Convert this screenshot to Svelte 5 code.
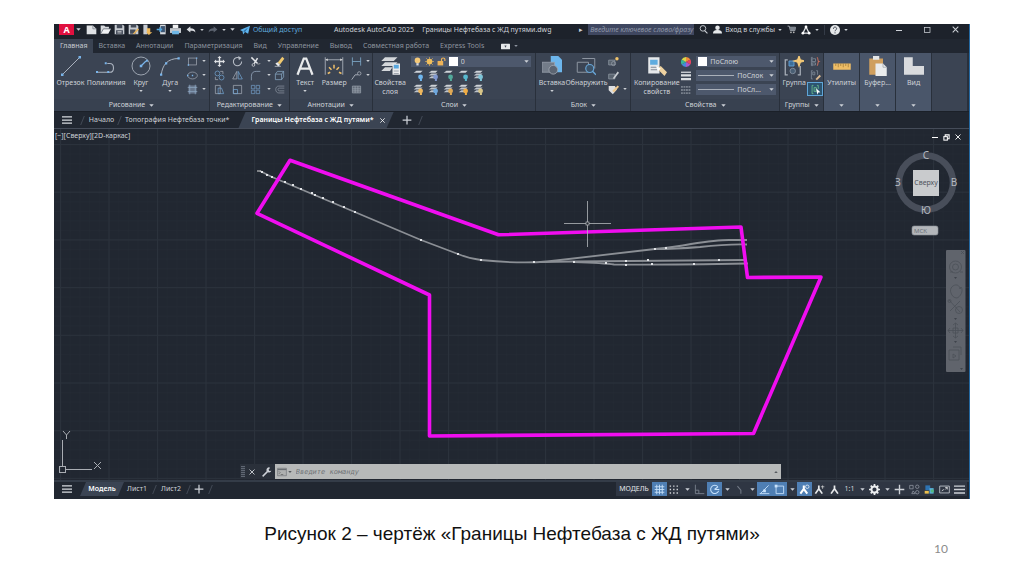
<script lang="ts">
	type Tool = { icon: string; label: string; menu?: boolean; cls?: string };

	const icons: Record<string, string> = {
		caret: '<path d="M1 4h14l-7 8z" fill="currentColor"/>',
		burger: '<path d="M0 3h16M0 8h16M0 13h16" stroke="currentColor" stroke-width="2"/>',
		plus: '<path d="M8 1v14M1 8h14" stroke="currentColor" stroke-width="2"/>',
		close: '<path d="M3 3l10 10M13 3L3 13" stroke="currentColor" stroke-width="1.8"/>',
		min: '<path d="M2 9h12" stroke="currentColor" stroke-width="2"/>',
		max: '<rect x="3" y="3" width="11" height="10" fill="none" stroke="currentColor" stroke-width="1.5"/>',
		restore: '<path d="M5 5V2h9v9h-3" fill="none" stroke="currentColor" stroke-width="2.4"/><rect x="2" y="6" width="8" height="8" fill="none" stroke="currentColor" stroke-width="2.4"/>',
		new: '<path d="M1 2h9l5 5v8H1z" fill="#dfe1e4"/><path d="M10 2v5h5" fill="none" stroke="#69707c"/>',
		open: '<path d="M1 14V2h5l2 2h5v3" fill="#d6d9dd"/><path d="M1 14l4-7h11l-4 7z" fill="#f0f1f2"/><path d="M1 14l4-7h11" fill="none" stroke="#555c68"/>',
		save: '<path d="M1 1h12l2 2v12H1z" fill="#c7cbd1"/><path d="M4 1h8v5H4zM3 9h10v6H3z" fill="#454c59"/><path d="M5 11h6M5 13h6" stroke="#e5e6e8"/>',
		saveas: '<path d="M1 1h12l2 2v12H1z" fill="#c7cbd1"/><path d="M4 1h8v4H4zM3 8h8v6H3z" fill="#454c59"/><path d="M7 14l7-8 2 2-7 7z" fill="#e9b45c"/>',
		export: '<path d="M2 1h6v14H2z" fill="#c7cbd1"/><path d="M7 6h5v6h3l-5 4-4-4h1z" fill="#efb95b"/>',
		mobile: '<path d="M6 1h8v14H6z" fill="#d7dade"/><path d="M7 3h6v9H7z" fill="#3d5673"/><path d="M1 8h6M5 5l3 3-3 3" fill="none" stroke="#55a6dd" stroke-width="2"/>',
		print: '<path d="M4 1h8v5H4z" fill="#f0f1f2"/><path d="M0 6h16v7H0z" fill="#c3c7cc"/><path d="M3 10h10v5H3z" fill="#6fb7e6"/>',
		undo: '<path d="M1 7l6-5v3c5 0 8 2 8 7-2-3-4-3-8-3v3z" fill="#d9dce0"/>',
		redo: '<path d="M15 7L9 2v3C4 5 1 7 1 12c2-3 4-3 8-3v3z" fill="#5c636f"/>',
		plane: '<path d="M0 8L16 1l-3 13-5-3-3 4-1-5z" fill="#5fb4ee"/><path d="M5 10l8-6-5 7" fill="#2c6da3"/>',
		search: '<circle cx="7" cy="6" r="5" fill="none" stroke="currentColor" stroke-width="1.6"/><path d="M10 10l5 5" stroke="currentColor" stroke-width="2"/>',
		user: '<circle cx="8" cy="5" r="4" fill="#e6e8ea"/><path d="M0 15c0-5 4-6 8-6s8 1 8 6z" fill="#e6e8ea"/>',
		cart: '<path d="M1 2h3l2 8h8l1-6H5" fill="none" stroke="#aab0b8" stroke-width="1.6"/><path d="M5 4h10l-1 5H6z" fill="#7d848f"/><circle cx="7" cy="13" r="1.5" fill="#bbb"/><circle cx="12" cy="13" r="1.5" fill="#bbb"/>',
		share: '<path d="M8 3L3 13h10z" fill="none" stroke="#e1e3e6" stroke-width="2"/><circle cx="8" cy="3" r="2.2" fill="#fff"/><circle cx="3" cy="13" r="2.2" fill="#fff"/><circle cx="13" cy="13" r="2.2" fill="#fff"/>',
		help: '<circle cx="8" cy="8" r="8" fill="#e4e6e8"/><path d="M5.5 6c0-4 5.500-3 5 0 0 2-2.500 2-2.500 4" fill="none" stroke="#3a414e" stroke-width="1.600"/><circle cx="8" cy="12.500" r="1" fill="#3a414e"/>',
		line: '<path d="M1 15L15 1" stroke="#a9b1bd" stroke-width=".8"/><path d="M0 14h2v2H0zM14 0h2v2h-2z" fill="#79b4ea"/>',
		pline: '<path d="M0 13h11c4 0 4-7 0-7H9" fill="none" stroke="#a9b1bd" stroke-width=".9"/><path d="M0 12h1.600v1.600H0zM9 12h1.600v1.600H9zM7 5h1.600v1.600H7z" fill="#79b4ea"/>',
		circle: '<circle cx="8" cy="8" r="7.200" fill="none" stroke="#a9b1bd" stroke-width=".7"/><path d="M8 8l4-4" stroke="#79b4ea"/><path d="M7 7h2v2H7zM12 3h1.500v1.500H12z" fill="#79b4ea"/>',
		arc: '<path d="M1 15C2 7 6 2 15 2" fill="none" stroke="#a9b1bd" stroke-width=".8"/><path d="M0 14h1.800v1.800H0zM4 5h1.800v1.800H4zM14 1h1.800v1.800H14z" fill="#79b4ea"/>',
		rect: '<rect x="2" y="3" width="12" height="10" fill="none" stroke="#a5acb7"/><path d="M1 12h2v2H1zM13 2h2v2h-2z" fill="#79b4ea"/>',
		ellipse: '<ellipse cx="8" cy="8" rx="7" ry="5" fill="none" stroke="#a5acb7"/><path d="M7 7h2v2H7zM0 7h2v2H0z" fill="#79b4ea"/>',
		hatch: '<rect x="2" y="2" width="12" height="12" fill="#66758a"/><path d="M1 5h14M1 11h14M4 1v14M12 1v14" stroke="#90aac6"/>',
		move: '<path d="M8 2v12M2 8h12" stroke="#e1e3e6" stroke-width="2"/><path d="M8 0l3 3H5zM8 16l3-3H5zM0 8l3-3v6zM16 8l-3-3v6z" fill="#e1e3e6"/>',
		rotate: '<path d="M11 3a6 6 0 1 0 3 5" fill="none" stroke="#b9bfc8" stroke-width="1.500"/><path d="M9 0l5 3-4 3z" fill="#b9bfc8"/>',
		trim: '<path d="M2 2l9 9M11 3l-5 8" stroke="#e3e5e8" stroke-width="2.200"/><circle cx="5" cy="13" r="2" fill="none" stroke="#e3e5e8"/><path d="M11 12l4-1" stroke="#bbb"/>',
		erase: '<path d="M5 10l7-9 3 3-6 8z" fill="#f0c96f"/><path d="M2 11l3-2 4 4-3 2z" fill="#ececec"/><path d="M1 15h9" stroke="#d9dce0"/>',
		copy: '<circle cx="5" cy="5" r="3.500" fill="none" stroke="#74a9d8"/><path d="M9 2h4v4M2 10v4h4" fill="none" stroke="#aab0ba"/><circle cx="11" cy="11" r="3.500" fill="none" stroke="#74a9d8"/>',
		mirror: '<path d="M7 2v11H1z" fill="none" stroke="#aab0ba"/><path d="M9 2v11h6z" fill="none" stroke="#74a9d8"/>',
		fillet: '<path d="M2 15V9c0-5 3-7 7-7h6" fill="none" stroke="#8fa0b6" stroke-width="1.200"/>',
		box: '<path d="M2 6h9v8H2zM2 6l3-4h9v8l-3 4M11 6l3-4" fill="none" stroke="#8fb0ce"/>',
		stretch: '<path d="M2 2h7v12H2z" fill="none" stroke="#aab0ba"/><path d="M6 6h5l3 8H6z" fill="none" stroke="#74a9d8"/>',
		scale: '<path d="M2 2h12v12H2z" fill="none" stroke="#aab0ba"/><path d="M2 8h6v6H2z" fill="none" stroke="#74a9d8"/>',
		array: '<path d="M2 2h5v5H2zM9 2h5v5H9zM2 9h5v5H2zM9 9h5v5H9z" fill="none" stroke="#74a0cb"/>',
		offset: '<path d="M15 3H7c-6 0-6 10 0 10h8M15 6H8c-3 0-3 4 0 4h7" fill="none" stroke="#8f98a5"/>',
		textA: '<path d="M2 15L7 2h2l5 13M4 10h8" fill="none" stroke="#e8eaec" stroke-width="1.800"/>',
		dim: '<path d="M1 1v14M15 1v14M2 3h12" fill="none" stroke="#aab1bc" stroke-width=".7"/><path d="M3 14l2-1M4 9l2 2M8 7v3M12 9l-2 2M14 14l-2-1" stroke="#efbf69" stroke-width="1.200"/><path d="M1 3l2-1v2zM15 3l-2-1v2z" fill="#ddd"/>',
		linear: '<path d="M2 2v12M14 2v12M2 8h12" stroke="#7eaacb" stroke-width="1.200"/>',
		leader: '<path d="M1 14l5-7h4" fill="none" stroke="#bac0c9" stroke-width="1.200"/><circle cx="12" cy="5" r="2.500" fill="none" stroke="#bac0c9"/>',
		table: '<path d="M2 3h12v10H2z" fill="#606976" stroke="#9ba3af"/><path d="M2 7h12M2 10h12M6 3v10M10 3v10" stroke="#9ba3af"/>',
		layers: '<path d="M4 1h10l-3 3H1zM4 5h10l-3 3H1zM4 9h6l-2 3H1z" fill="#d4d7db"/><path d="M10 6h6v9h-6z" fill="#e9eaec"/><path d="M11 7h4v3h-4z" fill="#58a7df"/><path d="M11 12h4M11 14h4" stroke="#8a929e" stroke-width=".6"/>',
		bulb: '<circle cx="8" cy="6" r="5" fill="#f5c978"/><path d="M6 11h4v4H6z" fill="#d9dce0"/>',
		sun: '<circle cx="8" cy="8" r="5" fill="#f1bf5c"/><path d="M8 0v16M0 8h16M2 2l12 12M14 2L2 14" stroke="#f1bf5c"/>',
		lock: '<path d="M1 7h10v8H1z" fill="#eeb358"/><path d="M8 7V4c0-3 6-3 6 0v3" fill="none" stroke="#eeb358" stroke-width="2"/>',
		insert: '<path d="M7 0h6l3 3v10H7z" fill="#6db6ec"/><path d="M0 5h10v8H0z" fill="#737c89" stroke="#9ba2ad" stroke-width=".6"/><circle cx="9" cy="11" r="3.500" fill="#5c6572" stroke="#9ba2ad" stroke-width=".7"/>',
		detect: '<path d="M1 5h9v8H1zM5 2h10v8" fill="none" stroke="#8d95a1" stroke-width=".8"/><circle cx="11" cy="10" r="3.200" fill="#3c5369" stroke="#68a6d8" stroke-width=".9"/><path d="M13 12l3 3" stroke="#68a6d8" stroke-width="1.200"/>',
		blockNew: '<path d="M1 6h9v7H1z" fill="#59636f" stroke="#98a0ab"/><circle cx="8" cy="11" r="3" fill="none" stroke="#98a0ab"/><circle cx="13" cy="4" r="2.500" fill="#f0c36c"/>',
		blockEdit: '<path d="M1 6h9v7H1z" fill="#59636f" stroke="#98a0ab"/><path d="M7 12l7-10 2 2-7 9z" fill="#c8ccd2"/>',
		tag: '<path d="M1 3h9l3 5-6 7-6-6z" fill="#dddfe2"/><path d="M6 10l8-8 2 2-7 8z" fill="#f0c88c"/>',
		props: '<path d="M1 1h9v13H1z" fill="#e6e8ea"/><path d="M2.500 3h6v4h-6z" fill="#60acdf"/><path d="M3 9h5M3 11h5" stroke="#848b96" stroke-width=".8"/><path d="M8 10l3-2 5 5-2 3z" fill="#eed2a0"/><path d="M7 8l4 2-2 2z" fill="#fff"/>',
		wheel: '<path d="M8 8V0a8 8 0 0 1 7 4z" fill="#f08b3b"/><path d="M8 8l7-4a8 8 0 0 1 0 8z" fill="#e8435f"/><path d="M8 8l7 4a8 8 0 0 1-7 4z" fill="#a95ac8"/><path d="M8 8v8a8 8 0 0 1-7-4z" fill="#4689dc"/><path d="M8 8l-7 4a8 8 0 0 1 0-8z" fill="#38b597"/><path d="M8 8L1 4a8 8 0 0 1 7-4z" fill="#d8d64b"/>',
		weight: '<path d="M0 2h16" stroke="#d9dce0" stroke-width="2"/><path d="M0 7h16M0 13h16" stroke="#d9dce0" stroke-width="3.500"/>',
		ltype: '<path d="M0 3h16M0 8h16M0 13h16" stroke="#78808c" stroke-width="3" stroke-dasharray="3 1"/>',
		group: '<path d="M3 3H1v12h2M11 15h2V8" fill="none" stroke="#a9b0ba"/><path d="M4 4h4v4H4z" fill="#3d6e99" stroke="#62a2d8" stroke-width=".7"/><circle cx="7" cy="12" r="2.200" fill="#4a5f74" stroke="#8d99a8" stroke-width=".6"/><path d="M12 0l1 3 3 1-3 1-1 3-1-3-3-1 3-1z" fill="#f4c977" stroke="#f4c977"/>',
		ungroup: '<path d="M4 2H2v12h2M3 4h5v4H3zM3 10h5v3H3z" fill="none" stroke="#8b96a5"/><path d="M10 2c3 1 0 5 3 6-3 1 0 5-3 6" fill="none" stroke="#c56e5e" stroke-width="1.500"/>',
		groupEdit: '<path d="M4 1H2v12h2M4 3h3v4H4zM9 1h2v6" fill="none" stroke="#8b96a5"/><path d="M8 13l6-6 2 2-6 6z" fill="#d9b891"/>',
		groupSel: '<path d="M5 2H3v12h2M6 5h3v6H6zM10 2h2v5" fill="none" stroke="#69b88a" stroke-width="1.300"/><path d="M9 6l6 6-3 .5-1.500 3z" fill="#fff"/>',
		ruler: '<path d="M1 6h14v5H1z" fill="#eebd66"/><path d="M3 6v2M5 6v3M7 6v2M9 6v3M11 6v2M13 6v3" stroke="#8f6c2d" stroke-width=".5"/>',
		clip: '<path d="M1 2h11v13H1z" fill="#cf9f5e"/><path d="M4 0h5v3H4z" fill="#e5e6e8"/><path d="M6 6h6l3 3v7H6z" fill="#e9ebec"/><path d="M12 6v3h3" fill="none" stroke="#8d959f" stroke-width=".5"/>',
		view: '<path d="M0 1h7v7h9v7H0z" fill="#d9dbde"/>',
		wrench: '<path d="M1 15l8-8" stroke="currentColor" stroke-width="2.400"/><path d="M13 1a4 4 0 1 0 2 5l-3 .5-1.500-2z" fill="currentColor"/>',
		console: '<path d="M1 2h14v12H1z" fill="#aeb0b0" stroke="#6b6f73"/><path d="M1 4h14" stroke="#6b6f73" stroke-width="2"/><path d="M3 7l2 2-2 2M6 12h4" fill="none" stroke="#555"/>',
		grid: '<path d="M1 4h14M1 8h14M1 12h14M4 1v14M8 1v14M12 1v14" stroke="currentColor" stroke-width="1.300"/>',
		snap: '<path d="M1 3h14M1 8h14M1 13h14" stroke="#d5d8dc" stroke-width="2" stroke-dasharray="2 3"/>',
		ortho: '<path d="M2 1v13h13M2 9h5v5" fill="none" stroke="#7a828f" stroke-width="1.300"/>',
		polar: '<path d="M13 4a6 6 0 1 0 1 6M8 8h7M8 8l5-4" fill="none" stroke="currentColor" stroke-width="1.500"/>',
		iso: '<path d="M5 3l5 6v5" fill="none" stroke="#747c88" stroke-width="1.500"/>',
		track: '<path d="M1 14h14M2 14L14 2" fill="none" stroke="currentColor" stroke-width="1.300"/><path d="M6 8h4v4H6z" fill="currentColor"/>',
		osnap: '<path d="M3 3h11v11H3z" fill="none" stroke="currentColor" stroke-width="1.300"/><path d="M1 1h4v4H1z" fill="currentColor"/>',
		person: '<path d="M8 2v6M8 7l-5 7M8 7l5 7" stroke="#e8eaec" stroke-width="2.500" fill="none"/>',
		personA: '<path d="M7 2v6M7 7l-5 7M7 7l5 7" stroke="#fff" stroke-width="3" fill="none"/><circle cx="12" cy="4" r="2.500" fill="none" stroke="#fff"/>',
		personB: '<path d="M7 2v6M7 7l-5 7M7 7l5 7" stroke="#e8eaec" stroke-width="2.500" fill="none"/><path d="M10 4h5M12.500 2v5" stroke="#ddd"/>',
		gear: '<circle cx="8" cy="8" r="4.500" fill="none" stroke="#eceef0" stroke-width="3"/><path d="M8 0v3M8 13v3M0 8h3M13 8h3M2.500 2.500l2 2M11.500 11.500l2 2M13.500 2.500l-2 2M2.500 13.500l2-2" stroke="#eceef0" stroke-width="2.500"/>',
		isolate: '<path d="M1 2h5v5H1zM6 10l3 4H4z" fill="none" stroke="#9aa1ac"/><circle cx="12" cy="4" r="2.500" fill="none" stroke="#9aa1ac"/><circle cx="12" cy="12" r="2.500" fill="none" stroke="#9aa1ac"/>',
		perf: '<path d="M2 2h7v7H2z" fill="#2e73b2"/><path d="M8 6h6v8H8z" fill="#5ab2df"/><path d="M1 10h6v4H1z" fill="#ecc04e"/><circle cx="12" cy="10" r="2.500" fill="#55b981"/>',
		full: '<path d="M1 3h14v10H1z" fill="none" stroke="#bcc1c9" stroke-width="1.300"/><path d="M4 10l3-2M12 5L9 8M12 5v3M12 5H9" fill="none" stroke="#e3e5e8" stroke-width="1.200"/>',
		media: '<rect x="0" y="3" width="16" height="10" rx="1" fill="#e6e8ea"/><path d="M6 6h4l-2 4z" fill="#444b58"/>'
	};

	// small layer commands: a sheet stack with a coloured mark
	const layerMarks = ['#6fb6ee', '#7f97cf', '#52a99b', '#58b9cf', '#7ec5d8', '#efb85e', '#6fa7dd', '#e0aa56', '#f0ad45', '#d8c689'];

	const drawTools: Tool[] = [
		{ icon: 'line', label: 'Отрезок', cls: 'w31' },
		{ icon: 'pline', label: 'Полилиния', cls: 'w40' },
		{ icon: 'circle', label: 'Круг', menu: true, cls: 'w29' },
		{ icon: 'arc', label: 'Дуга', menu: true, cls: 'w29' }
	];
	const ribbonTabs = ['Главная', 'Вставка', 'Аннотации', 'Параметризация', 'Вид', 'Управление', 'Вывод', 'Совместная работа', 'Express Tools'];
	const quick = ['new', 'open', 'save', 'saveas', 'export', 'mobile', 'print'];
	const editTools = ['move', 'rotate', 'trim', 'caret', 'erase', 'copy', 'mirror', 'fillet', 'caret', 'box', 'stretch', 'scale', 'array', 'caret', 'offset'];
	const folded: Tool[] = [
		{ icon: 'ruler', label: 'Утилиты' },
		{ icon: 'clip', label: 'Буфер...' },
		{ icon: 'view', label: 'Вид' }
	];
	const status = [
		{ icon: 'grid', on: true }, { icon: 'snap' }, { icon: 'caret' }, { icon: 'ortho' },
		{ icon: 'polar', on: true }, { icon: 'caret' }, { icon: 'iso' }, { icon: 'caret' },
		{ icon: 'track', on: true }, { icon: 'osnap', on: true }, { icon: 'caret' },
		{ icon: 'personA', on: true }, { icon: 'personB' }, { icon: 'person' }, { icon: '1:1' }, { icon: 'caret' },
		{ icon: 'gear' }, { icon: 'caret' }, { icon: 'plus' }, { icon: 'isolate' },
		{ icon: 'perf' }, { icon: 'full' }, { icon: 'burger' }
	];
	const nodes = [
		[262, 172], [267, 175], [272, 177], [285, 182], [293, 185], [301, 189], [312, 193], [315, 195], [323, 198],
		[333, 202], [344, 207], [355, 212], [421, 240], [458, 254], [481, 260], [534, 262], [574, 262],
		[606, 263], [626, 261], [626, 265], [648, 260], [655, 249], [666, 248], [652, 264], [694, 264], [719, 260]
	];
</script>

{#snippet icon(name: string, size: number)}
	<svg class="icon" width={size} height={size} viewBox="0 0 16 16" aria-hidden="true">{@html icons[name]}</svg>
{/snippet}

{#snippet tool(t: Tool)}
	<button class={`tool ${t.cls ?? ''}`} type="button">
		{@render icon(t.icon, 20)}
		<span>{t.label}</span>
		{#if t.menu}{@render icon('caret', 4)}{/if}
	</button>
{/snippet}

{#snippet mini(name: string)}
	<button class="mini" class:arrow={name === 'caret'} type="button" aria-label={name}>{@render icon(name, name === 'caret' ? 4 : 11)}</button>
{/snippet}

{#snippet title(label: string)}
	<button class="panel-title" type="button">{label} {@render icon('caret', 5)}</button>
{/snippet}

<main class="slide">
	<div class="window">
		<header class="titlebar">
			<button class="logo" type="button">A</button>
			<button class="mini arrow" type="button" aria-label="Меню">{@render icon('caret', 5)}</button>
			<div class="quick">
				{#each quick as name}
					<button type="button" aria-label={name}>{@render icon(name, 11)}</button>
				{/each}
			</div>
			<div class="history">
				<button type="button" aria-label="Отменить">{@render icon('undo', 10)}</button>
				{@render icon('caret', 4)}
				<button type="button" aria-label="Повторить">{@render icon('redo', 10)}</button>
				{@render icon('caret', 4)}
				{@render icon('caret', 5)}
			</div>
			<button class="share" type="button">{@render icon('plane', 10)} Общий доступ</button>
			<div class="doc-title"><span>Autodesk AutoCAD 2025</span><span>Границы Нефтебаза с ЖД путями.dwg</span></div>
			<div class="account">
				<span class="play">▸</span>
				<input type="text" placeholder="Введите ключевое слово/фразу" aria-label="Поиск" />
				<button type="button" aria-label="Найти">{@render icon('search', 9)}</button>
				<button class="login" type="button">{@render icon('user', 9)} Вход в службы {@render icon('caret', 4)}</button>
				<button type="button" aria-label="Магазин">{@render icon('cart', 9)}</button>
				<button class="pair" type="button" aria-label="Приложения">{@render icon('share', 10)}{@render icon('caret', 4)}</button>
				<button class="pair help" type="button" aria-label="Справка">{@render icon('help', 10)}{@render icon('caret', 4)}</button>
			</div>
			<div class="win-buttons">
				<button type="button" aria-label="Свернуть">{@render icon('min', 8)}</button>
				<button type="button" aria-label="Развернуть">{@render icon('max', 8)}</button>
				<button type="button" aria-label="Закрыть">{@render icon('close', 9)}</button>
			</div>
		</header>

		<nav class="ribbon-tabs">
			{#each ribbonTabs as tab, i}
				<button class:active={i === 0} type="button">{tab}</button>
			{/each}
			<button class="pair media" type="button" aria-label="Вид ленты">{@render icon('media', 9)}{@render icon('caret', 4)}</button>
		</nav>

		<section class="ribbon">
			<div class="panel draw">
				<div class="panel-body">
					{#each drawTools as t}{@render tool(t)}{/each}
					<div class="grid two">
						{#each ['rect', 'caret', 'ellipse', 'caret', 'hatch', 'caret'] as name}{@render mini(name)}{/each}
					</div>
				</div>
				{@render title('Рисование')}
			</div>
			<div class="panel edit">
				<div class="panel-body">
					<div class="grid five">
						{#each editTools as name}{@render mini(name)}{/each}
					</div>
				</div>
				{@render title('Редактирование')}
			</div>
			<div class="panel notes">
				<div class="panel-body">
					{@render tool({ icon: 'textA', label: 'Текст', menu: true, cls: 'w29' })}
					{@render tool({ icon: 'dim', label: 'Размер', cls: 'w29' })}
					<div class="grid two">
						{#each ['linear', 'caret', 'leader', 'caret', 'table'] as name}{@render mini(name)}{/each}
					</div>
				</div>
				{@render title('Аннотации')}
			</div>
			<div class="panel layers">
				<div class="panel-body">
					{@render tool({ icon: 'layers', label: 'Свойства слоя', cls: 'w33' })}
					<div class="layer-side">
						<div class="combo">
							{@render icon('bulb', 9)}{@render icon('sun', 9)}{@render icon('lock', 9)}<i class="swatch"></i>
							<select aria-label="Слой"><option>0</option></select>
							{@render icon('caret', 5)}
						</div>
						<div class="layer-grid">
							{#each layerMarks as color, i}
								<button class="mini" type="button" aria-label={`Команда слоя ${i + 1}`}>
									<svg class="icon" width="11" height="11" viewBox="0 0 16 16">
										<path d="M5 1h9l-3 3H1z" fill="#cfd3d8" />
										{#if i > 4 || i === 1 || i === 4}
											<path d="M5 5h9l-3 3H1zM5 9h9l-3 3H1z" fill="#bfc4cb" />
										{/if}
										<circle cx="11" cy="10" r="3.500" fill={color} />
										<path d="M10 13h3v3h-3z" fill={color} />
									</svg>
								</button>
							{/each}
						</div>
					</div>
				</div>
				{@render title('Слои')}
			</div>
			<div class="panel block">
				<div class="panel-body">
					{@render tool({ icon: 'insert', label: 'Вставка', menu: true, cls: 'w29' })}
					{@render tool({ icon: 'detect', label: 'Обнаружить', cls: 'w40' })}
					<div class="grid two">
						{#each ['blockNew', '', 'blockEdit', '', 'tag', 'caret'] as name}
							{#if name}{@render mini(name)}{:else}<span></span>{/if}
						{/each}
					</div>
				</div>
				{@render title('Блок')}
			</div>
			<div class="panel props">
				<div class="panel-body">
					{@render tool({ icon: 'props', label: 'Копирование свойств', cls: 'w49' })}
					<div class="prop-rows">
						<div class="prop-row">
							{@render icon('wheel', 10)}
							<div class="combo"><i class="swatch"></i><select aria-label="Цвет"><option>ПоСлою</option></select>{@render icon('caret', 5)}</div>
						</div>
						<div class="prop-row">
							{@render icon('weight', 10)}
							<div class="combo"><i class="rule"></i><select aria-label="Вес линий"><option>ПоСлок</option></select>{@render icon('caret', 5)}</div>
						</div>
						<div class="prop-row">
							{@render icon('ltype', 10)}
							<div class="combo"><i class="rule"></i><select aria-label="Тип линий"><option>ПоСл...</option></select>{@render icon('caret', 5)}</div>
						</div>
					</div>
				</div>
				{@render title('Свойства')}
			</div>
			<div class="panel groups">
				<div class="panel-body">
					{@render tool({ icon: 'group', label: 'Группа', cls: 'w26' })}
					<div class="grid one">
						{@render mini('ungroup')}
						{@render mini('groupEdit')}
						<button class="mini picked" type="button" aria-label="Выбор групп">{@render icon('groupSel', 11)}</button>
					</div>
				</div>
				{@render title('Группы')}
			</div>
			{#each folded as t}
				<div class="panel folded">
					<div class="panel-body">{@render tool(t)}</div>
					{@render title('')}
				</div>
			{/each}
			<div class="panel rest"></div>
		</section>

		<nav class="file-tabs">
			<button class="burger" type="button" aria-label="Меню вкладок">{@render icon('burger', 10)}</button>
			<i class="slash"></i>
			<button class="start" type="button">Начало</button>
			<i class="slash"></i>
			<button class="topo" type="button">Топография Нефтебаза точки*</button>
			<button class="current" type="button">Границы Нефтебаза с ЖД путями* {@render icon('close', 7)}</button>
			<button type="button" aria-label="Новая вкладка">{@render icon('plus', 10)}</button>
			<i class="slash"></i>
		</nav>

		<section class="viewport">
			<svg class="drawing" viewBox="54 129 915 351" role="img" aria-label="Чертёж">
				<defs>
					<pattern id="minor" x="60" y="144" width="9.700" height="9.540" patternUnits="userSpaceOnUse">
						<path d="M.5 0v10M0 .5h10" stroke="#242a33" stroke-width=".6" fill="none" />
					</pattern>
					<pattern id="major" x="60" y="144" width="48.500" height="47.700" patternUnits="userSpaceOnUse">
						<path d="M.5 0v48M0 .5h49" stroke="#2b323c" fill="none" />
					</pattern>
				</defs>
				<rect x="54" y="129" width="915" height="351" fill="#212731" />
				<rect x="54" y="129" width="915" height="351" fill="url(#minor)" />
				<rect x="54" y="129" width="915" height="351" fill="url(#major)" />

				<g fill="none" stroke="#8b8f95" stroke-width="1.800">
					<path d="M260 171l12 6 149 63 37 14q12 5 23 6 40 4 66 1.500l108-12.500q20-2 36-5 26-4 38-4h18" />
					<path d="M655 249q20 0 45-2 26-3 47-2.500" />
					<path d="M540 262l34-.5 171-1.500" />
					<path d="M574 262q30 1 40 2.500 50 .5 134-1" />
				</g>
				{#each nodes as [x, y]}
					<rect x={x - 1} y={y - 1} width="2" height="2" fill="#e2e4e7" />
				{/each}
				<path d="M257 171h4" stroke="#ddd" />

				<path
					d="M290 160.300L498.500 234.800 741 227l6.500 50.500 73.500-.5-67.500 156.500-324 2.500V295L257 213.300z"
					fill="none"
					stroke="#f00df0"
					stroke-width="3.600"
					stroke-linejoin="round"
				/>

				<path d="M587.500 201v46M564 223.500h47" stroke="#b4b7bb" stroke-width=".8" />
				<rect x="586" y="222" width="3" height="3" fill="#222831" stroke="#b4b7bb" stroke-width=".7" />

				<g fill="none" stroke="#a9adb3">
					<path d="M62.500 440v26M65 469.500h27" />
					<rect x="59.500" y="466.500" width="6" height="6" />
					<path d="M63 431l3.500 4 3.500-4M66.500 435v4M94 462l7 7M101 462l-7 7" />
				</g>

				<circle cx="926" cy="182.500" r="27" fill="none" stroke="#484e5a" stroke-width="6.500" />
				<rect x="913" y="170" width="26" height="26" fill="#c9cbcd" />
				<g text-anchor="middle" font-size="10" fill="#b4b8bf">
					<text x="926" y="159">С</text>
					<text x="926" y="214">Ю</text>
					<text x="898" y="186">З</text>
					<text x="954" y="186">В</text>
					<text x="926" y="185" font-size="7" fill="#50555d">Сверху</text>
				</g>
				<rect x="912" y="226" width="26" height="9" rx="2" fill="#b3b6ba" stroke="#8b9097" stroke-width=".6" />
				<text x="914" y="233" font-size="6" fill="#6c7178">МСК</text>

				<rect x="946" y="250" width="19.500" height="122" rx="1" fill="#60646c" />
				<g fill="none" stroke="#4b5058" stroke-width=".8">
					<circle cx="955.500" cy="267" r="6" />
					<circle cx="955.500" cy="267" r="3" />
					<path d="M950 272h3M960 272h3M961 251l3 3M964 251l-3 3" />
					<path d="M951 293c-3-7 8-12 9-4l1-2c3 4-1 10-4 11-3 0-5-2-6-5z" />
					<path d="M949 300l11 12M960 301l-10 10" />
					<circle cx="949.500" cy="301" r="1.500" />
					<circle cx="959" cy="310" r="3.500" />
					<path d="M955.500 323v15M948 330.500h15M953 325l2.500-2 2.500 2M953 336l2.500 2 2.500-2M950 328l-2 2.500 2 2.500M961 328l2 2.500-2 2.500M953 328h5v5h-5z" />
					<path d="M949 350h10v10h-10zM953 347h8v8M953 354l3 2-3 2z" />
				</g>
				<path d="M954 277h3l-1.500 2zM954 318h3l-1.500 2zM954 341h3l-1.500 2zM960 368h3l-1.500 2z" fill="#3f444c" />
			</svg>

			<span class="view-label">[−][Сверху][2D-каркас]</span>
			<div class="view-buttons">
				<button type="button" aria-label="Свернуть вид">{@render icon('min', 8)}</button>
				<button type="button" aria-label="Восстановить вид">{@render icon('restore', 7)}</button>
				<button type="button" aria-label="Закрыть вид">{@render icon('close', 8)}</button>
			</div>

			<div class="command">
				<i class="grip"></i>
				<button type="button" aria-label="Закрыть строку">{@render icon('close', 8)}</button>
				<button type="button" aria-label="Настройка">{@render icon('wrench', 10)}</button>
				<div class="prompt">
					{@render icon('console', 10)}{@render icon('caret', 4)}
					<input type="text" placeholder="Введите команду" aria-label="Команда" />
					<span class="up">{@render icon('caret', 4)}</span>
				</div>
			</div>
		</section>

		<footer class="statusbar">
			<button class="burger" type="button" aria-label="Меню листов">{@render icon('burger', 10)}</button>
			<button class="model" type="button">Модель</button>
			<button class="sheet" type="button">Лист1</button>
			<i class="slash"></i>
			<button class="sheet" type="button">Лист2</button>
			<i class="slash"></i>
			<button class="add" type="button" aria-label="Новый лист">{@render icon('plus', 10)}</button>
			<i class="slash"></i>
			<div class="toggles">
				<button class="space" type="button">МОДЕЛЬ</button>
				{#each status as s}
					<button class:on={s.on} class:arrow={s.icon === 'caret'} type="button" aria-label={s.icon}>
						{#if s.icon === '1:1'}1:1{:else}{@render icon(s.icon, s.icon === 'caret' ? 5 : 11)}{/if}
					</button>
				{/each}
			</div>
		</footer>
	</div>

	<p class="caption">Рисунок 2 – чертёж «Границы Нефтебаза с ЖД путями»</p>
	<span class="page">10</span>
</main>

<style>
	:global(body) {
		margin: 0;
		background: #fff;
	}

	.slide {
		display: flex;
		flex-direction: column;
		padding: 24px 54px 0;
	}

	.window {
		border-right: 1px solid #2468a0;
		background: #212731;
		color: #cdd1d7;
		font-family: 'Noto Sans', 'Open Sans', sans-serif;
		font-size: 7px;
		line-height: 8px;
	}

	button,
	input,
	select {
		margin: 0;
		padding: 0;
		border: 0;
		outline: 0;
		background: none;
		color: inherit;
		font: inherit;
	}

	button {
		display: inline-flex;
		align-items: center;
		justify-content: center;
		flex: none;
		white-space: nowrap;
	}

	.icon {
		display: block;
		flex: none;
	}

	.titlebar {
		display: flex;
		align-items: center;
		height: 15px;
		padding: 0 9px 4px 5px;
		box-sizing: border-box;
		background: #1d222b;
	}

	.logo {
		width: 15px;
		height: 11px;
		background: #e0103f;
		color: #fff;
		font-size: 9px;
		font-weight: 700;
	}

	.quick {
		display: flex;
		gap: 3px;
		margin-left: 4px;
	}

	.history {
		display: flex;
		align-items: center;
		gap: 4px;
		margin-left: 5px;
	}

	.share {
		gap: 3px;
		margin-left: 5px;
		color: #5fa9dc;
	}

	.doc-title {
		display: flex;
		flex: 1;
		justify-content: center;
		gap: 8px;
		padding-left: 4px;
		white-space: nowrap;
	}

	.account {
		display: flex;
		align-items: center;
		gap: 5px;
	}

	.account input {
		width: 106px;
		height: 11px;
		padding-left: 2px;
		box-sizing: border-box;
		background: #3f4760;
		font-style: italic;
	}

	.account input::placeholder {
		color: #8f97a9;
		opacity: 1;
	}

	.play {
		width: 4px;
	}

	.login {
		gap: 3px;
	}

	.pair {
		gap: 4px;
	}

	.help {
		padding-left: 5px;
		border-left: 1px solid #343b47;
	}

	.win-buttons {
		display: flex;
		gap: 20px;
		margin-left: 47px;
	}

	.ribbon-tabs {
		display: flex;
		height: 14px;
		color: #8d949f;
	}

	.ribbon-tabs button {
		padding: 0 5px 0 6px;
	}

	.ribbon-tabs .active {
		background: #3b4453;
		color: #c8ccd3;
	}

	.ribbon-tabs .media {
		margin-left: 6px;
	}

	.ribbon {
		display: flex;
		height: 58px;
		padding-right: 2px;
		background: #29303b;
		gap: 1px;
	}

	.panel {
		display: flex;
		flex-direction: column;
		min-width: 0;
		background: #3b4453;
	}

	.draw { flex: 155; }
	.edit { flex: 79; }
	.notes { flex: 82; }
	.layers { flex: 163; }
	.block { flex: 94; }
	.props { flex: 148; }
	.groups { flex: 43; }
	.folded { flex: 35; background: #4a566a; }
	.rest { flex: 35; }

	.panel-body {
		display: flex;
		flex: 1;
		justify-content: space-between;
		min-height: 0;
		padding: 1px 1px 0;
	}

	.panel-title {
		gap: 4px;
		height: 12px;
		background: #384150;
	}

	.folded .panel-title {
		background: none;
	}

	.folded .panel-body {
		justify-content: center;
	}

	.tool {
		flex-direction: column;
		justify-content: flex-start;
		gap: 2px;
		padding-top: 2px;
		line-height: 9px;
		white-space: normal;
	}

	.tool span {
		height: 9px;
	}

	.w26 { width: 26px; }
	.w29 { width: 29px; }
	.w31 { width: 31px; }
	.w33 { width: 33px; }
	.w40 { width: 40px; }
	.w49 { width: 49px; }

	.grid {
		display: grid;
		grid-auto-rows: 14px;
		align-items: center;
	}

	.one { grid-template-columns: 16px; }
	.two { grid-template-columns: 15px 8px; }
	.five {
		flex: 1;
		grid-template-columns: 18px 18px 18px 6px 18px;
	}

	.mini {
		height: 14px;
	}

	.arrow {
		width: 8px;
	}

	.picked {
		background: #2c5470;
		box-shadow: inset 0 0 0 1px #5fa5d8;
	}

	.layer-side {
		display: flex;
		flex: 1;
		flex-direction: column;
		margin: 2px 3px 0 4px;
	}

	.layer-grid {
		display: grid;
		grid-template-columns: repeat(5, 15px);
		margin-top: 1px;
	}

	.combo {
		display: flex;
		flex: 1;
		align-items: center;
		gap: 3px;
		height: 11px;
		min-width: 0;
		padding: 0 2px;
		background: #4d586c;
	}

	.layer-side .combo {
		flex: none;
	}

	.combo select {
		flex: 1;
		min-width: 0;
		height: 11px;
		appearance: none;
	}

	.swatch {
		width: 9px;
		height: 9px;
		background: #fff;
	}

	.rule {
		width: 36px;
		height: 1px;
		background: #aab0ba;
	}

	.prop-rows {
		display: flex;
		flex: 1;
		flex-direction: column;
		gap: 3px;
		margin: 2px 2px 0 0;
	}

	.prop-row {
		display: flex;
		align-items: center;
		gap: 5px;
	}

	.file-tabs {
		display: flex;
		align-items: stretch;
		height: 16px;
		border-top: 1px solid #1b2028;
		border-bottom: 1px solid #454c59;
	}

	.burger {
		width: 26px;
		color: #d8dbe0;
	}

	.slash {
		width: 1px;
		height: 9px;
		margin: auto 5px auto 2px;
		background: #434a56;
		transform: skewX(-22deg);
	}

	.start {
		width: 27px;
		margin-right: 2px;
	}

	.topo {
		margin-right: 9px;
	}

	.current {
		gap: 5px;
		margin-right: 8px;
		padding: 0 8px 0 13px;
		background: #3b4453;
		clip-path: polygon(7px 0, 100% 0, calc(100% - 7px) 100%, 0 100%);
		color: #fff;
		font-weight: 600;
	}

	.file-tabs .slash:last-child {
		margin-left: 8px;
	}

	.viewport {
		position: relative;
	}

	.drawing {
		display: block;
		width: 100%;
		height: auto;
	}

	.view-label {
		position: absolute;
		top: 3px;
		left: 1px;
	}

	.view-buttons {
		position: absolute;
		top: 4px;
		right: 7px;
		display: flex;
		gap: 4px;
		color: #fff;
	}

	.command {
		position: absolute;
		right: 20.5%;
		bottom: 1px;
		left: 20.3%;
		display: flex;
		height: 15px;
		background: #2a303a;
	}

	.command button {
		width: 15px;
	}

	.grip {
		width: 4px;
		margin: 2px 0 2px 1px;
		background: repeating-linear-gradient(#606773 0 1px, #343b46 1px 2px);
	}

	.prompt {
		display: flex;
		flex: 1;
		align-items: center;
		gap: 1px;
		padding: 0 3px 0 2px;
		background: #b7b9b9;
		color: #55595e;
	}

	.prompt input {
		flex: 1;
		height: 13px;
		padding-left: 3px;
		font-family: 'DejaVu Sans Mono', monospace;
		font-style: italic;
	}

	.prompt input::placeholder {
		color: #6f7377;
		opacity: 1;
	}

	.up {
		transform: rotate(180deg);
	}

	.statusbar {
		display: flex;
		align-items: stretch;
		height: 19px;
		box-sizing: border-box;
		padding-right: 2px;
		padding-bottom: 3px;
		border-top: 2px solid #343c48;
	}

	.model {
		width: 44px;
		background: #3b4453;
		clip-path: polygon(6px 0, 100% 0, calc(100% - 6px) 100%, 0 100%);
		color: #fff;
		font-weight: 600;
	}

	.sheet {
		width: 26px;
	}

	.add {
		width: 14px;
	}

	.statusbar .slash {
		margin: auto 3px auto 4px;
	}

	.toggles {
		display: flex;
		margin-left: auto;
		background: #2f3643;
	}

	.toggles button {
		width: 15px;
		height: 14px;
	}

	.toggles .space {
		width: 36px;
		color: #e4e6e9;
	}

	.toggles .arrow {
		width: 10px;
	}

	.toggles .on {
		background: #4f7fb4;
		color: #c8e2fb;
	}

	.caption {
		margin: 26px 0 0;
		color: #111;
		font: 19px/18px 'Liberation Sans', Arial, sans-serif;
		text-align: center;
	}

	.page {
		align-self: flex-end;
		margin-right: 22px;
		color: #8b8b8b;
		font: 12px/12px Lato, sans-serif;
	}
</style>
